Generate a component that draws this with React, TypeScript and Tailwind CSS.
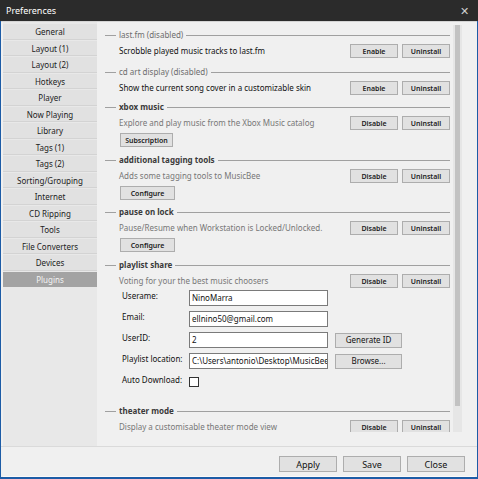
import React from 'react';

const FONT = { fontFamily: '"Noto Sans", "Open Sans", sans-serif' };

const navItems = [
  'General', 'Layout (1)', 'Layout (2)', 'Hotkeys', 'Player', 'Now Playing', 'Library',
  'Tags (1)', 'Tags (2)', 'Sorting/Grouping', 'Internet', 'CD Ripping', 'Tools',
  'File Converters', 'Devices', 'Plugins',
];

function SmallButton({ label, className = '' }: { label: string; className?: string }) {
  return (
    <div
      className={`h-[14px] flex items-center justify-center bg-[#e1e1e1] border border-[#adadad] text-[7px] font-semibold text-[#222] leading-none ${className}`}
    >
      {label}
    </div>
  );
}

function Header({ title, disabled }: { title: string; disabled?: boolean }) {
  return (
    <div className="h-[14px] flex items-center">
      <div className="w-[11px] h-px bg-[#a0a0a0]" />
      <span
        className={`px-[3px] text-[8px] leading-none ${disabled ? 'text-[#6d6d6d]' : 'font-bold text-[#3a3a3a]'}`}
      >
        {title}
      </span>
      <div className="flex-1 h-px bg-[#a0a0a0]" />
    </div>
  );
}

function Plugin({
  title, desc, enabled = true, extra, disabledHeader, className = '', children,
}: {
  title: string; desc: string; enabled?: boolean; extra?: string; disabledHeader?: boolean;
  className?: string; children?: React.ReactNode;
}) {
  return (
    <div className={className}>
      <Header title={title} disabled={disabledHeader} />
      <div className="mt-[2px] h-[14px] flex items-center">
        <span className={`pl-[14px] flex-1 text-[8px] leading-none ${enabled ? 'text-[#777]' : 'text-[#111]'}`}>{desc}</span>
        <SmallButton label={enabled ? 'Disable' : 'Enable'} className="w-[48px]" />
        <SmallButton label="Uninstall" className="w-[48px] ml-[4px]" />
      </div>
      {extra && (
        <div className="mt-[3px] pl-[15px]">
          <SmallButton label={extra} className={extra === 'Subscription' ? 'w-[53px]' : 'w-[55px]'} />
        </div>
      )}
      {children}
    </div>
  );
}

function Field({ label, value, button }: { label: string; value?: string; button?: string }) {
  return (
    <div className="h-[16px] flex items-center">
      <span className="w-[84px] shrink-0 pl-[17px] text-[8px] text-[#111] leading-none -mt-[4px] whitespace-nowrap">{label}</span>
      {value !== undefined ? (
        <div className="w-[139px] h-[16px] bg-white border border-[#7a7a7a] flex items-center px-[2px] text-[8px] text-[#111] leading-none overflow-hidden whitespace-nowrap">
          {value}
        </div>
      ) : (
        <div className="w-[10px] h-[10px] bg-white border border-[#333]" />
      )}
      {button && (
        <div className="ml-[7px] w-[67px] h-[15px] bg-[#e1e1e1] border border-[#adadad] flex items-center justify-center text-[8px] text-[#111] leading-none">
          {button}
        </div>
      )}
    </div>
  );
}

export default function App() {
  return (
    <div style={FONT} className="w-[478px] h-[479px] bg-[#1d5ca6] px-px pb-[2px] flex flex-col overflow-hidden">
      <div className="h-[21px] -mx-px bg-[#2b2b2b] flex items-center justify-between pl-[6px] pr-[9px]">
        <span className="text-[9px] text-white leading-none">Preferences</span>
        <span className="text-[11px] text-[#cfcfcf] leading-none">✕</span>
      </div>
      <div className="flex-1 bg-[#f0f0f0] border-t border-[#d4d4d4] flex flex-col">
        <div className="h-[425px] flex border-b border-[#dadada]">
          <div className="ml-[2px] w-[94px] bg-[#e8e8e8] pt-[2px] flex flex-col gap-px">
            {navItems.map((n) => (
              <div
                key={n}
                className={`h-[15.5px] shrink-0 flex items-center justify-center text-[8px] leading-none ${
                  n === 'Plugins' ? 'bg-[#a3a3a3] text-[#f4f4f4]' : 'bg-[#e1e1e1] text-[#222] border-b border-[#d3d3d3]'
                }`}
              >
                <span className="mt-[2px]">{n}</span>
              </div>
            ))}
          </div>
          <div className="flex-1 flex">
            <div className="w-[353px] pl-[8px] pt-[6px] h-[410px] overflow-hidden">
              <Plugin title="last.fm (disabled)" disabledHeader enabled={false} desc="Scrobble played music tracks to last.fm" />
              <Plugin className="mt-[7px]" title="cd art display (disabled)" disabledHeader enabled={false} desc="Show the current song cover in a customizable skin" />
              <Plugin className="mt-[5px]" title="xbox music" desc="Explore and play music from the Xbox Music catalog" extra="Subscription" />
              <Plugin className="mt-[6px]" title="additional tagging tools" desc="Adds some tagging tools to MusicBee" extra="Configure" />
              <Plugin className="mt-[5px]" title="pause on lock" desc="Pause/Resume when Workstation is Locked/Unlocked." extra="Configure" />
              <Plugin className="mt-[6px]" title="playlist share" desc="Voting for your the best music choosers">
                <div className="mt-[2px] flex flex-col gap-[5px]">
                  <Field label="Userame:" value="NinoMarra" />
                  <Field label="Email:" value="ellnino50@gmail.com" />
                  <Field label="UserID:" value="2" button="Generate ID" />
                  <Field label="Playlist location:" value="C:\Users\antonio\Desktop\MusicBee" button="Browse..." />
                  <Field label="Auto Download:" />
                </div>
              </Plugin>
              <Plugin className="mt-[14px]" title="theater mode" desc="Display a customisable theater mode view" />
            </div>
            <div className="ml-[3px] mt-[3px] w-[9px] h-[407px] bg-[#e6e6e6] px-[2px]">
              <div className="w-full h-[381px] bg-[#c2c2c2]" />
            </div>
          </div>
        </div>
        <div className="flex-1 flex justify-end items-start gap-[6px] pt-[9px] pr-[10px] border-b border-[#fafafa] mx-[2px]">
          {['Apply', 'Save', 'Close'].map((b) => (
            <div
              key={b}
              className="w-[58px] h-[16px] bg-[#e1e1e1] border border-[#adadad] flex items-center justify-center text-[9px] text-[#111] leading-none"
            >
              {b}
            </div>
          ))}
        </div>
      </div>
    </div>
  );
}
